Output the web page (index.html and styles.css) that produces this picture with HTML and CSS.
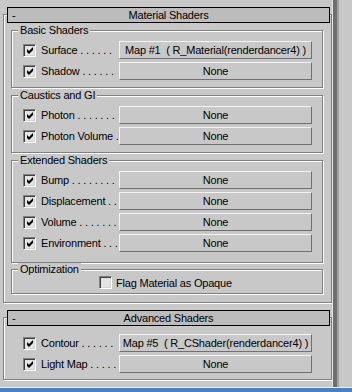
FILE: index.html
```html
<!DOCTYPE html>
<html lang="en">
<head>
  <meta charset="UTF-8">
  <title>Material Shaders</title>
  <link rel="stylesheet" href="styles.css">
</head>
<body>
  <div class="panel">
    <div class="rollouts">

      <!-- Material Shaders rollout -->
      <div class="rollout">
        <div class="rollout-head"><span class="toggle">-</span><span class="title">Material Shaders</span><span></span></div>

        <div class="group">
          <div class="group-title">Basic Shaders</div>
          <div class="row">
            <span class="check on"><svg viewBox="0 0 9 9" width="9" height="9"><path d="M1 3 L3 5 L7 1 L7 4 L3 8 L1 6 Z"/></svg></span>
            <span class="label">Surface . . . . . .</span>
            <button class="map">Map #1  ( R_Material(renderdancer4) )</button>
          </div>
          <div class="row">
            <span class="check on"><svg viewBox="0 0 9 9" width="9" height="9"><path d="M1 3 L3 5 L7 1 L7 4 L3 8 L1 6 Z"/></svg></span>
            <span class="label">Shadow . . . . . .</span>
            <button class="map">None</button>
          </div>
        </div>

        <div class="group">
          <div class="group-title">Caustics and GI</div>
          <div class="row">
            <span class="check on"><svg viewBox="0 0 9 9" width="9" height="9"><path d="M1 3 L3 5 L7 1 L7 4 L3 8 L1 6 Z"/></svg></span>
            <span class="label">Photon . . . . . . .</span>
            <button class="map">None</button>
          </div>
          <div class="row">
            <span class="check on"><svg viewBox="0 0 9 9" width="9" height="9"><path d="M1 3 L3 5 L7 1 L7 4 L3 8 L1 6 Z"/></svg></span>
            <span class="label">Photon Volume .</span>
            <button class="map">None</button>
          </div>
        </div>

        <div class="group extended">
          <div class="group-title">Extended Shaders</div>
          <div class="row">
            <span class="check on"><svg viewBox="0 0 9 9" width="9" height="9"><path d="M1 3 L3 5 L7 1 L7 4 L3 8 L1 6 Z"/></svg></span>
            <span class="label">Bump . . . . . . . .</span>
            <button class="map">None</button>
          </div>
          <div class="row">
            <span class="check on"><svg viewBox="0 0 9 9" width="9" height="9"><path d="M1 3 L3 5 L7 1 L7 4 L3 8 L1 6 Z"/></svg></span>
            <span class="label">Displacement . .</span>
            <button class="map">None</button>
          </div>
          <div class="row">
            <span class="check on"><svg viewBox="0 0 9 9" width="9" height="9"><path d="M1 3 L3 5 L7 1 L7 4 L3 8 L1 6 Z"/></svg></span>
            <span class="label">Volume . . . . . . .</span>
            <button class="map">None</button>
          </div>
          <div class="row">
            <span class="check on"><svg viewBox="0 0 9 9" width="9" height="9"><path d="M1 3 L3 5 L7 1 L7 4 L3 8 L1 6 Z"/></svg></span>
            <span class="label">Environment . . .</span>
            <button class="map">None</button>
          </div>
        </div>

        <div class="group optimization">
          <div class="group-title">Optimization</div>
          <div class="row flag">
            <span class="check"></span>
            <span>Flag Material as Opaque</span>
          </div>
        </div>
      </div>

      <!-- Advanced Shaders rollout -->
      <div class="rollout advanced">
        <div class="rollout-head"><span class="toggle">-</span><span class="title">Advanced Shaders</span><span></span></div>
        <div class="row">
          <span class="check on"><svg viewBox="0 0 9 9" width="9" height="9"><path d="M1 3 L3 5 L7 1 L7 4 L3 8 L1 6 Z"/></svg></span>
          <span class="label">Contour . . . . . .</span>
          <button class="map">Map #5  ( R_CShader(renderdancer4) )</button>
        </div>
        <div class="row">
          <span class="check on"><svg viewBox="0 0 9 9" width="9" height="9"><path d="M1 3 L3 5 L7 1 L7 4 L3 8 L1 6 Z"/></svg></span>
          <span class="label">Light Map . . . . .</span>
          <button class="map">None</button>
        </div>
      </div>

    </div>

    <div class="scroll"><div class="track"></div></div>
  </div>
  <div class="taskbar"></div>
</body>
</html>
```

FILE: styles.css
```css
* {
  box-sizing: border-box;
}

body {
  margin: 0;
  width: 352px;
  height: 392px;
  overflow: hidden;
  background: #c8c8c8;
  color: #000;
  font-family: 'Liberation Sans', Arial, sans-serif;
  font-size: 11px;
  letter-spacing: -0.2px;
}

.panel {
  display: flex;
  height: 387px;
}

.rollouts {
  width: 332px;
}

/* etched frame: grey line, white line one pixel in */
.rollout {
  margin: 14px 0 0 3px;
  padding-bottom: 8px;
  border: 1px solid #808080;
  box-shadow: inset 1px 1px 0 #fff, 1px 1px 0 #fff;
}

.rollout-head {
  display: grid;
  grid-template-columns: 20px 1fr 20px;
  align-items: center;
  height: 16px;
  margin: -8px 1px 0 3px;
  border: 1px solid #000;
  background: #bcbcbc;
  line-height: 14px;
}

.toggle {
  padding-left: 4px;
}

.title {
  text-align: center;
}

.group {
  margin: 7px 8px 0 7px;
  padding-bottom: 7px;
  border: 1px solid #808080;
  box-shadow: inset 1px 1px 0 #fff, 1px 1px 0 #fff;
}

.group-title {
  display: table;
  margin: -7px 0 4px 6px;
  padding: 0 2px;
  background: #c8c8c8;
  line-height: 13px;
}

.group.extended {
  padding-bottom: 10px;
}

.group.optimization {
  margin-top: 6px;
  padding-bottom: 4px;
}

.group.optimization .group-title {
  margin-bottom: 0;
}

.row {
  display: flex;
  align-items: center;
  height: 18px;
  padding-left: 11px;
}

.row + .row {
  margin-top: 3px;
}

.row.flag {
  height: 13px;
  padding-left: 87px;
}

.row.flag .check {
  margin-right: 4px;
}

.check {
  flex: none;
  display: flex;
  align-items: center;
  justify-content: center;
  width: 13px;
  height: 13px;
  margin-right: 5px;
  border: 1px solid;
  border-color: #808080 #fff #fff #808080;
  box-shadow: inset 1px 1px 0 #404040, inset -1px -1px 0 #d4d4d4;
  background: #e4e4e4;
}

.check svg {
  display: block;
  margin: 1px 0 0 1px;
}

.check path {
  fill: #000;
}

.label {
  flex: none;
  width: 78px;
  white-space: nowrap;
}

.map {
  flex: none;
  width: 193px;
  height: 18px;
  padding: 0;
  border: 1px solid;
  border-color: #f4f4f4 #707070 #707070 #f4f4f4;
  background: #c8c8c8;
  color: #000;
  font: inherit;
  letter-spacing: inherit;
  white-space: pre;
  text-align: center;
}

.rollout.advanced .rollout-head {
  margin-bottom: 8px;
}

.rollout.advanced .row {
  padding-left: 19px;
}

.rollout.advanced {
  padding-bottom: 6px;
}

.scroll {
  flex: none;
  width: 20px;
}

.track {
  width: 7px;
  height: 100%;
  border-left: 1px solid #e4e4e4;
  border-right: 2px solid #a4a4a4;
  background: #6e6e6e;
}

.taskbar {
  height: 5px;
  border-top: 1px solid #f0f0f0;
  background: #4d7fc4;
}
```
